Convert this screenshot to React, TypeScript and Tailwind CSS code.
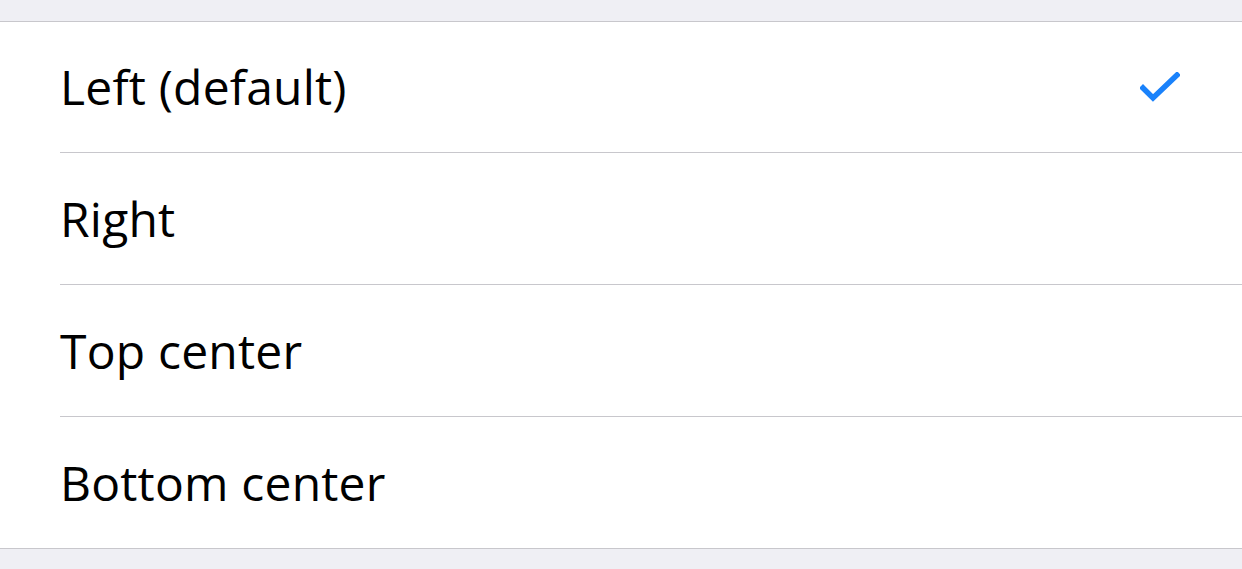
const options = ['Left (default)', 'Right', 'Top center', 'Bottom center'];

function Check() {
  return (
    <svg width="40" height="30" viewBox="0 0 40 30" fill="none">
      <path d="M3 16 L13 26 L37 3" stroke="#1a82fb" strokeWidth="5.5" strokeLinecap="square" />
    </svg>
  );
}

export default function App() {
  const selected = 0;
  const heights = ['h-[131px]', 'h-[132px]', 'h-[132px]', 'h-[131px]'];
  return (
    <div className="h-[569px] w-[1242px] overflow-hidden bg-[#efeff4]" style={{ fontFamily: '"Open Sans", "Noto Sans", sans-serif' }}>
      <div className="h-[21px]" />
      <ul className="border-y border-[#c8c7cc] bg-white">
        {options.map((label, i) => (
          <li key={label} className="pl-[60px]">
            <div
              className={`flex items-center justify-between pr-[62px] ${heights[i]} ${
                i < options.length - 1 ? 'border-b border-[#c8c7cc]' : ''
              }`}
            >
              <span className="text-[48px] leading-none tracking-[0.2px] text-black">{label}</span>
              {i === selected && <Check />}
            </div>
          </li>
        ))}
      </ul>
    </div>
  );
}
